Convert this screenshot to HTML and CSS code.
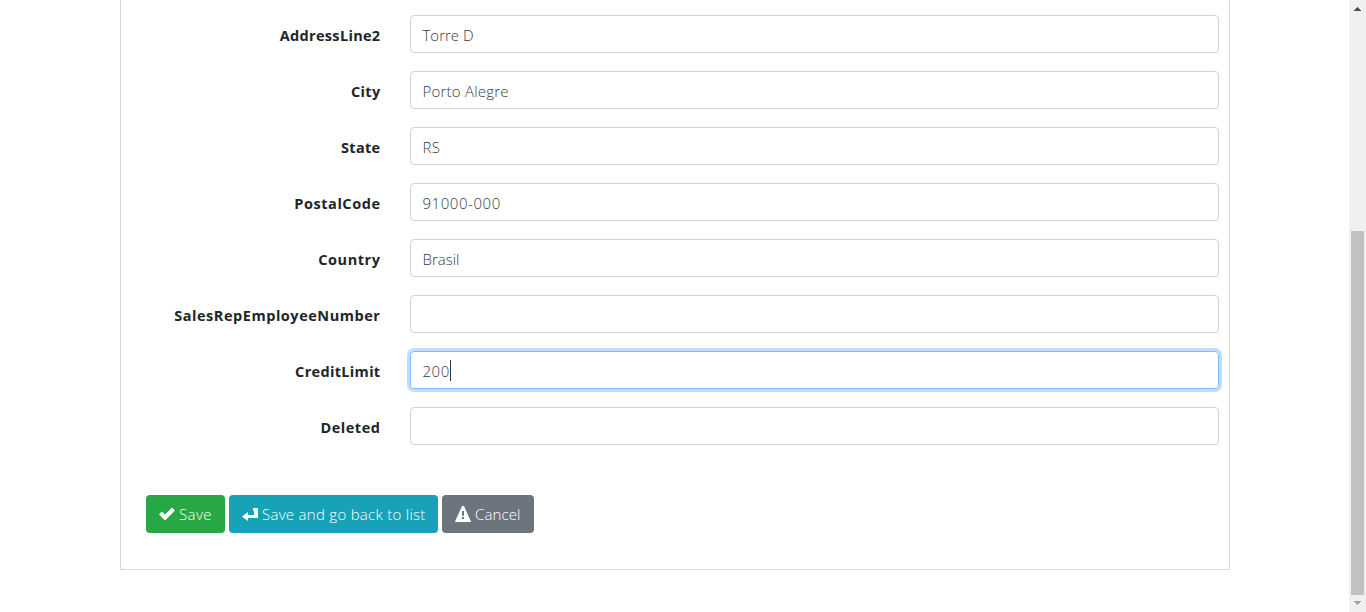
FILE: index.html
```html
<!DOCTYPE html>
<html lang="en">
<head>
<meta charset="utf-8">
<title>Edit Customer</title>
<link rel="stylesheet" href="styles.css">
</head>
<body>
<main class="page">
  <form class="card">
    <div class="row"><label class="label"><span>AddressLine2</span></label><div class="field tight"><span>Torre D</span></div></div>
    <div class="row"><label class="label"><span>City</span></label><div class="field"><span>Porto Alegre</span></div></div>
    <div class="row"><label class="label"><span>State</span></label><div class="field"><span>RS</span></div></div>
    <div class="row"><label class="label wide"><span>PostalCode</span></label><div class="field digits"><span>91000-000</span></div></div>
    <div class="row"><label class="label wide"><span>Country</span></label><div class="field tight"><span>Brasil</span></div></div>
    <div class="row"><label class="label wide"><span>SalesRepEmployeeNumber</span></label><div class="field"></div></div>
    <div class="row"><label class="label"><span>CreditLimit</span></label><div class="field digits focused"><span>200</span><i class="caret"></i></div></div>
    <div class="row"><label class="label wide"><span>Deleted</span></label><div class="field"></div></div>
    <div class="actions">
      <button type="button" class="btn save"><svg class="icon" viewBox="0 0 16 16"><path d="M0 8.5 3 5.5 6 8.5 13 1.5 16 4.500 6 14.500Z"/></svg><span>Save</span></button>
      <button type="button" class="btn back"><svg class="icon" viewBox="0 0 16 16"><path d="M11 2h5v10H6v3L0 10.500 6 6v3h6V5h-1Z"/></svg><span>Save and go back to list</span></button>
      <button type="button" class="btn cancel"><svg class="icon" viewBox="0 0 16 16"><path fill-rule="evenodd" d="M7 0h2l6.500 14.500L16 16H0l.5-1.500ZM7 5v4l.5 1h1L9 9V5ZM7 11v2h2v-2Z"/></svg><span>Cancel</span></button>
    </div>
  </form>
</main>
<aside class="scrollbar">
  <svg class="arrow" viewBox="0 0 17 17" shape-rendering="crispEdges"><path fill="#505050" d="M8 7h1v1h1v1h1v1h1v1H5v-1h1V9h1V8h1Z"/></svg>
  <div class="track"><div class="thumb"></div></div>
  <svg class="arrow" viewBox="0 0 17 17" shape-rendering="crispEdges"><path fill="#a3a3a3" d="M5 6h7v1h-1v1h-1v1H9v1H8V9H7V8H6V7H5Z"/></svg>
</aside>
</body>
</html>
```
FILE: styles.css
```css
* { box-sizing: border-box; }
body {
  margin: 0;
  height: 612px;
  display: flex;
  overflow: hidden;
  background: #fff;
  color: #212529;
  font: 300 15px/24px "Open Sans", "Noto Sans", sans-serif;
}
.page { flex: 1; padding-left: 120px; }
.card {
  width: 1110px;
  height: 570px;
  padding: 15px 10px 0 25px;
  border: 1px solid #dbdbdb;
  border-top: 0;
}
.row { display: flex; height: 38px; margin-bottom: 18px; }
.label {
  width: 264px;
  padding: 9px 29.500px 0 0;
  text-align: right;
  white-space: nowrap;
  font-weight: 700;
  font-size: 14.500px;
  letter-spacing: .32px;
}
.wide { letter-spacing: .54px; }
.field {
  flex: 1;
  display: flex;
  padding: 7px 12px 0 11.500px;
  border: 1px solid #ced4da;
  border-radius: 4px;
  color: #343a40;
  letter-spacing: .22px;
}
.tight { letter-spacing: 0; }
.digits { letter-spacing: .55px; }
.focused { border-color: #80bdff; box-shadow: 0 0 0 3px #bfdeff; }
.caret { width: 1px; height: 21px; margin: 1px 0 0 -.2px; background: #333; }
.actions { display: flex; gap: 4px; margin-top: 50px; }
.btn {
  display: flex;
  height: 38px;
  padding: 7px 0 0 13px;
  gap: 4px;
  border: 0;
  border-radius: 4px;
  color: #fff;
  font: inherit;
  letter-spacing: .28px;
  white-space: nowrap;
}
.icon { width: 16px; height: 16px; margin-top: 4px; fill: #fff; flex: none; }
.save { width: 79px; background: #28a745; letter-spacing: .4px; }
.back { width: 209px; background: #17a2b8; }
.cancel { width: 92px; background: #6c757d; letter-spacing: .1px; }
.scrollbar { width: 17px; display: flex; flex-direction: column; background: #f0f0f0; }
.arrow { width: 17px; height: 17px; }
.track { flex: 1; padding: 214px 2px 0; }
.thumb { height: 364px; background: #c1c1c1; }
```
